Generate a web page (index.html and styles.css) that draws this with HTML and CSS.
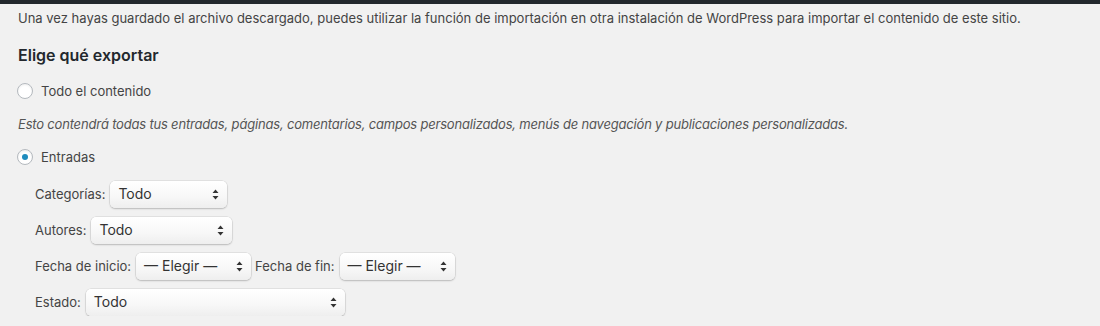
FILE: index.html
```html
<!DOCTYPE html>
<html lang="es">
  <head>
    <meta charset="UTF-8" />
    <meta name="viewport" content="width=device-width, initial-scale=1.0" />
    <title>Exportar</title>
    <link rel="stylesheet" href="styles.css">
  </head>
  <body>
    <div class="admin-bar"></div>

    <div class="wrap">
      <p class="intro">Una vez hayas guardado el archivo descargado, puedes utilizar la función de importación en otra instalación de WordPress para importar el contenido de este sitio.</p>

      <h2>Elige qué exportar</h2>

      <label class="radio-row">
        <span class="radio"></span>
        Todo el contenido
      </label>

      <p class="description">Esto contendrá todas tus entradas, páginas, comentarios, campos personalizados, menús de navegación y publicaciones personalizadas.</p>

      <label class="radio-row">
        <span class="radio checked"></span>
        Entradas
      </label>

      <div class="filters">
        <div class="filter-row">
          <span class="filter-label">Categorías:</span>
          <div class="select w-cat">
            <span>Todo</span>
            <svg class="arrows" width="7" height="11" viewBox="0 0 7 11"><path d="M3.5 0.5 L6.5 4 H0.5 Z M3.5 10.5 L6.5 7 H0.5 Z" fill="#333"/></svg>
          </div>
        </div>

        <div class="filter-row">
          <span class="filter-label">Autores:</span>
          <div class="select w-author">
            <span>Todo</span>
            <svg class="arrows" width="7" height="11" viewBox="0 0 7 11"><path d="M3.5 0.5 L6.5 4 H0.5 Z M3.5 10.5 L6.5 7 H0.5 Z" fill="#333"/></svg>
          </div>
        </div>

        <div class="filter-row">
          <span class="filter-label">Fecha de inicio:</span>
          <div class="select w-date">
            <span>— Elegir —</span>
            <svg class="arrows" width="7" height="11" viewBox="0 0 7 11"><path d="M3.5 0.5 L6.5 4 H0.5 Z M3.5 10.5 L6.5 7 H0.5 Z" fill="#333"/></svg>
          </div>
          <span class="filter-label second">Fecha de fin:</span>
          <div class="select w-date">
            <span>— Elegir —</span>
            <svg class="arrows" width="7" height="11" viewBox="0 0 7 11"><path d="M3.5 0.5 L6.5 4 H0.5 Z M3.5 10.5 L6.5 7 H0.5 Z" fill="#333"/></svg>
          </div>
        </div>

        <div class="filter-row">
          <span class="filter-label">Estado:</span>
          <div class="select w-status">
            <span>Todo</span>
            <svg class="arrows" width="7" height="11" viewBox="0 0 7 11"><path d="M3.5 0.5 L6.5 4 H0.5 Z M3.5 10.5 L6.5 7 H0.5 Z" fill="#333"/></svg>
          </div>
        </div>
      </div>
    </div>
  </body>
</html>
```

FILE: styles.css
```css
body {
  margin: 0;
  background: #f1f1f1;
  font-family: Inter, "Noto Sans", sans-serif;
  font-size: 13px;
  line-height: 20px;
  color: #444;
}

.admin-bar {
  height: 4px;
  background: #23282d;
}

.wrap {
  padding: 0 18px;
}

.intro {
  margin: 4px 0 0;
}

h2 {
  margin: 17px 0 0;
  font-size: 16px;
  line-height: 20px;
  font-weight: 600;
  color: #23282d;
}

.radio-row {
  display: flex;
  align-items: center;
  gap: 8px;
  margin-top: 16px;
  margin-left: -1px;
}

.description + .radio-row {
  margin-top: 13px;
}

.radio {
  width: 14px;
  height: 14px;
  border: 1px solid #b4b9be;
  border-radius: 50%;
  background: #fff;
  box-shadow: inset 0 1px 2px rgba(0, 0, 0, 0.07);
  display: flex;
  align-items: center;
  justify-content: center;
}

.radio.checked::before {
  content: "";
  width: 6px;
  height: 6px;
  border-radius: 50%;
  background: #1e8cbe;
}

.description {
  margin: 13px 0 0;
  font-style: italic;
  letter-spacing: -0.19px;
  color: #555;
}

.filters {
  margin-top: 13px;
  padding-left: 17px;
  display: flex;
  flex-direction: column;
  gap: 8px;
}

.filter-row {
  display: flex;
  align-items: center;
  height: 28px;
}

.filter-label {
  margin-right: 5px;
}

.filter-label.second {
  margin-left: 4px;
}

.select {
  box-sizing: border-box;
  height: 27px;
  display: flex;
  align-items: center;
  justify-content: space-between;
  padding: 0 8px;
  border-radius: 5px;
  background: linear-gradient(#ffffff, #f7f7f7 60%, #eeeeee);
  box-shadow: 0 0 0 0.5px rgba(0, 0, 0, 0.12), 0 1px 2px rgba(0, 0, 0, 0.18);
  font-size: 14px;
  color: #333;
}

.arrows {
  flex: none;
}

.w-cat { width: 117px; }
.w-author { width: 141px; }
.w-date { width: 115px; }
.w-status { width: 259px; }
```
